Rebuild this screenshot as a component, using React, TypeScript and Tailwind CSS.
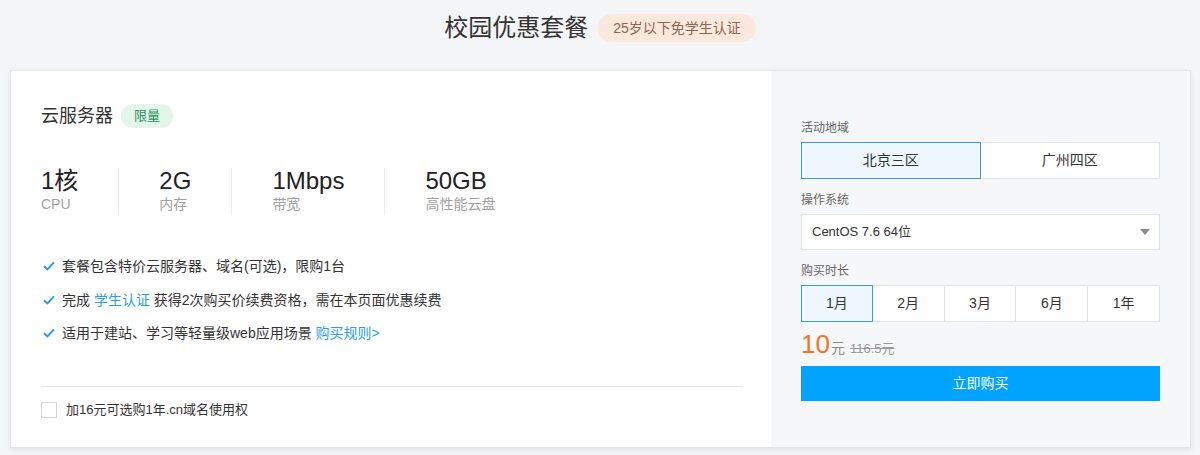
import React from 'react';

const specs = [
  { value: '1核', label: 'CPU' },
  { value: '2G', label: '内存' },
  { value: '1Mbps', label: '带宽' },
  { value: '50GB', label: '高性能云盘' },
];

const durations = ['1月', '2月', '3月', '6月', '1年'];

const Check = () => (
  <svg width="12" height="10" viewBox="0 0 12 10" className="shrink-0">
    <path d="M1 5.2 L4.4 8.4 L11 1.4" fill="none" stroke="#2a9bd8" strokeWidth="2" />
  </svg>
);

export default function App() {
  return (
    <div
      className="min-h-[455px] bg-[#f4f5f7] text-[#333]"
      style={{ fontFamily: '"Liberation Sans", "Noto Sans CJK SC", sans-serif' }}
    >
      <div className="flex h-[70px] items-center justify-center gap-[10px] pb-[14px]">
        <h1 className="text-[24px] leading-[30px] font-normal text-[#333]">校园优惠套餐</h1>
        <span className="rounded-full bg-[#fbe8dd] px-[15px] text-[14px] leading-[28px] text-[#8a6656]">
          25岁以下免学生认证
        </span>
      </div>

      <div className="ml-[10px] flex h-[378px] w-[1181px] border border-[#e3e4e6] shadow-[0_2px_6px_rgba(0,0,0,0.08)]">
        {/* left */}
        <div className="flex w-[760px] flex-col bg-white pl-[30px] pr-[28px] pt-[33px]">
          <div className="flex items-center gap-[8px]">
            <span className="text-[18px] leading-[24px]">云服务器</span>
            <span className="rounded-full bg-[#e4f5ea] px-[13px] text-[13px] leading-[24px] text-[#27935a]">限量</span>
          </div>

          <div className="mt-[40px] flex">
            {specs.map((s, i) => (
              <div
                key={s.label}
                className={`flex h-[47px] flex-col pr-[40px] ${i > 0 ? 'border-l border-[#ececec] pl-[40px]' : ''}`}
              >
                <span className="text-[24px] leading-[26px] text-[#222]">{s.value}</span>
                <span className="mt-[1px] text-[14px] leading-[18px] text-[#a0a0a0]">{s.label}</span>
              </div>
            ))}
          </div>

          <ul className="mt-[41px] flex flex-col gap-[13.5px] text-[14px] leading-[20px] text-[#333]">
            <li className="flex items-center gap-[7px] pl-[2px]">
              <Check />
              <span>套餐包含特价云服务器、域名(可选)，限购1台</span>
            </li>
            <li className="flex items-center gap-[7px] pl-[2px]">
              <Check />
              <span>
                完成 <a className="text-[#2b9fdc]">学生认证</a> 获得2次购买价续费资格，需在本页面优惠续费
              </span>
            </li>
            <li className="flex items-center gap-[7px] pl-[2px]">
              <Check />
              <span>
                适用于建站、学习等轻量级web应用场景 <a className="text-[#2b9fdc]">购买规则&gt;</a>
              </span>
            </li>
          </ul>

          <div className="mt-[43px] border-t border-[#e2e2e2] pt-[14px]">
            <label className="flex items-center gap-[9px] text-[13px] leading-[18px]">
              <span className="h-[16px] w-[16px] border border-[#d3d3d3] bg-white" />
              <span>加16元可选购1年.cn域名使用权</span>
            </label>
          </div>
        </div>

        {/* right */}
        <div className="flex flex-1 flex-col bg-[#f6f7f9] px-[30px] pt-[49px]">
          <div className="text-[12px] leading-[16px] text-[#666]">活动地域</div>
          <div className="mt-[6px] grid h-[37px] grid-cols-2 text-[14px]">
            <button className="border border-[#3c9ccf] bg-[#edf7fd] text-[#333]">北京三区</button>
            <button className="border border-l-0 border-[#e3e3e3] bg-white text-[#333]">广州四区</button>
          </div>

          <div className="mt-[13px] text-[12px] leading-[16px] text-[#666]">操作系统</div>
          <div className="mt-[6px] flex h-[36px] items-center justify-between border border-[#e3e3e3] bg-white pl-[10px] pr-[9px] text-[13px]">
            <span>CentOS 7.6 64位</span>
            <svg width="10" height="6" viewBox="0 0 10 6">
              <path d="M0 0 H10 L5 6 Z" fill="#8a8a8a" />
            </svg>
          </div>

          <div className="mt-[13px] text-[12px] leading-[16px] text-[#666]">购买时长</div>
          <div className="mt-[6px] grid h-[37px] grid-cols-5 text-[14px]">
            {durations.map((d, i) => (
              <button
                key={d}
                className={
                  i === 0
                    ? 'border border-[#3c9ccf] bg-[#edf7fd] text-[#333]'
                    : 'border border-l-0 border-[#e3e3e3] bg-white text-[#333]'
                }
              >
                {d}
              </button>
            ))}
          </div>

          <div className="mt-[7px] flex items-baseline">
            <span className="text-[26px] leading-[30px] text-[#ef7627]">10</span>
            <span className="ml-[1px] text-[14px] text-[#888]">元</span>
            <span className="ml-[5px] text-[13px] text-[#999] line-through">116.5元</span>
          </div>

          <button className="mt-[7px] h-[35px] w-full bg-[#00a4ff] text-[14px] text-white">立即购买</button>
        </div>
      </div>
    </div>
  );
}
